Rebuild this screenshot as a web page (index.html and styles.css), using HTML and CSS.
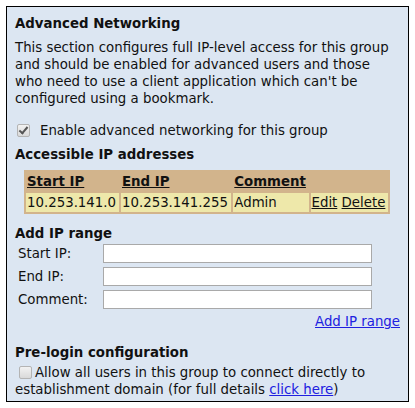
FILE: index.html
```html
<!DOCTYPE html>
<html>
<head>
<meta charset="utf-8">
<link rel="stylesheet" href="styles.css">
</head>
<body>
<div class="panel">
  <h2 class="title">Advanced Networking</h2>
  <p class="intro">This section configures full IP-level access for this group and should be enabled for advanced users and those who need to use a client application which can't be configured using a bookmark.</p>

  <label class="enable-row">
    <span class="check checked"></span>
    <span>Enable advanced networking for this group</span>
  </label>

  <h3 class="section">Accessible IP addresses</h3>
  <table class="ip-table">
    <thead>
      <tr>
        <th><a href="#">Start IP</a></th>
        <th><a href="#">End IP</a></th>
        <th><a href="#">Comment</a></th>
        <th></th>
      </tr>
    </thead>
    <tbody>
      <tr>
        <td>10.253.141.0</td>
        <td>10.253.141.255</td>
        <td>Admin</td>
        <td><a href="#">Edit</a> <a href="#">Delete</a></td>
      </tr>
    </tbody>
  </table>

  <h3 class="section add-heading">Add IP range</h3>
  <div class="range-form">
    <label class="field-label">Start IP:</label>
    <input class="field" type="text">
    <label class="field-label">End IP:</label>
    <input class="field" type="text">
    <label class="field-label">Comment:</label>
    <input class="field" type="text">
  </div>
  <div class="add-row"><a class="link" href="#">Add IP range</a></div>

  <h3 class="section prelogin">Pre-login configuration</h3>
  <p class="prelogin-text"><span class="check"></span>Allow all users in this group to connect directly to establishment domain (for full details <a class="link" href="#">click here</a>)</p>
</div>
</body>
</html>
```

FILE: styles.css
```css
html, body {
  margin: 0;
  padding: 0;
  background: #ffffff;
}

body {
  font-family: "DejaVu Sans", Verdana, sans-serif;
  font-size: 13.33px;
  color: #111111;
}

.panel {
  box-sizing: border-box;
  width: 403px;
  height: 396px;
  margin: 6px 0 0 6px;
  padding: 8px 8px 0 8px;
  border: 1px solid #000000;
  background: #dce6f2;
}

.title {
  margin: 0;
  font-size: 13.33px;
  font-weight: bold;
  line-height: 17px;
}

.intro {
  margin: 7px 0 0 0;
  line-height: 17px;
}

.enable-row {
  display: flex;
  align-items: center;
  gap: 10px;
  margin: 15px 0 0 2px;
  line-height: 17px;
}

.check {
  display: inline-block;
  box-sizing: border-box;
  width: 13px;
  height: 13px;
  border: 1px solid #b4b4b4;
  border-radius: 2px;
  background: linear-gradient(#f2f2f2, #d9d9d9);
  position: relative;
  vertical-align: -2px;
}

.check.checked::after {
  content: "";
  position: absolute;
  left: 3px;
  top: 0px;
  width: 3px;
  height: 7px;
  border: solid #555555;
  border-width: 0 2px 2px 0;
  transform: rotate(40deg);
}

.section {
  margin: 7px 0 0 0;
  font-size: 13.33px;
  font-weight: bold;
  line-height: 17px;
}

.ip-table {
  margin: 7px 0 0 9px;
  width: 366px;
  border-collapse: separate;
  border-spacing: 2px;
  background: #d2b48c;
}

.ip-table th {
  text-align: left;
  font-weight: bold;
  padding: 1px 1px 1px 1px;
  line-height: 17px;
}

.ip-table td {
  background: #eee8aa;
  padding: 1px 1px 1px 1px;
  line-height: 17px;
  white-space: nowrap;
}

.ip-table a {
  color: #111111;
  text-decoration: underline;
}

.add-heading {
  margin-top: 11px;
}

.range-form {
  display: grid;
  grid-template-columns: 85px 269px;
  row-gap: 4px;
  align-items: center;
  margin: 2px 0 0 3px;
}

.field-label {
  line-height: 17px;
}

.field {
  box-sizing: border-box;
  height: 19px;
  width: 269px;
  margin: 0;
  border: 1px solid #a9a9a9;
  background: #ffffff;
  font: inherit;
  padding: 0 2px;
}

.add-row {
  text-align: right;
  margin-top: 4px;
  line-height: 17px;
}

.link {
  color: #2020e0;
  text-decoration: underline;
}

.prelogin {
  margin-top: 14px;
}

.prelogin-text {
  margin: 3px 0 0 0;
  line-height: 17px;
}

.prelogin-text .check {
  margin: 0 3px 0 4px;
}
```
